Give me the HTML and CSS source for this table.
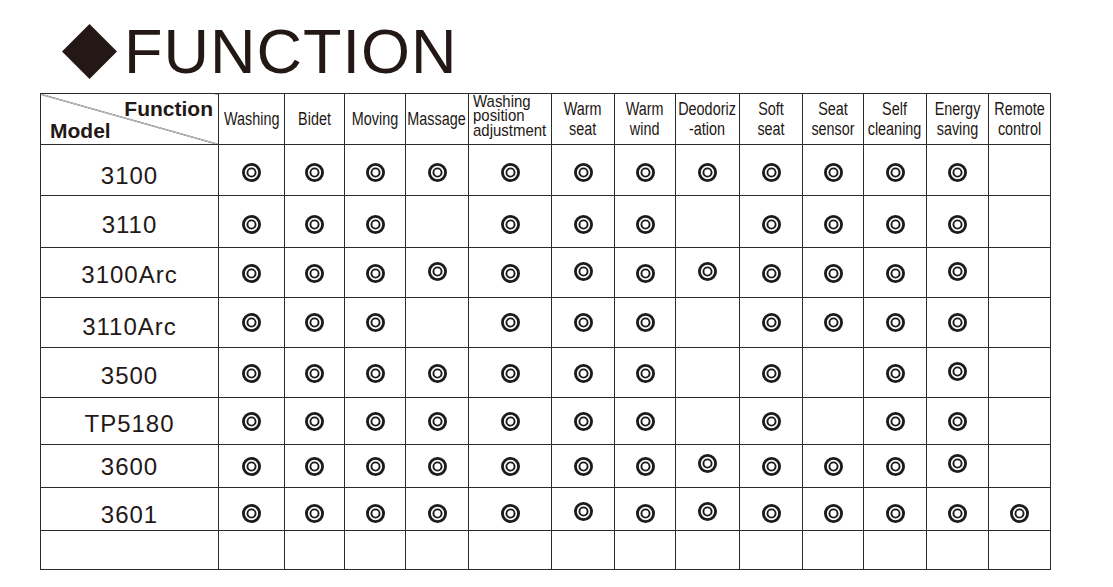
FILE: index.html
```html
<!DOCTYPE html>
<html lang="en">
<head>
<meta charset="utf-8">
<title>FUNCTION</title>
<link rel="stylesheet" href="styles.css">
</head>
<body>
<div class="page">
  <div class="title">
    <svg class="diamond" viewBox="0 0 55 55"><polygon points="27.5,0 55,27.5 27.5,55 0,27.5"/></svg>
    <h1>FUNCTION</h1>
  </div>
  <table class="grid">
    <colgroup>
      <col class="c-model"><col class="c66"><col class="c60"><col class="c61"><col class="c63"><col class="c83"><col class="c63"><col class="c61"><col class="c64"><col class="c63"><col class="c61"><col class="c63"><col class="c62"><col class="c62">
    </colgroup>
    <thead>
      <tr class="rh">
        <th class="fn"><div class="fn-top">Function</div><div class="fn-bottom">Model</div></th>
        <th><div class="hw"><span>Washing</span></div></th>
        <th><div class="hw"><span>Bidet</span></div></th>
        <th><div class="hw"><span>Moving</span></div></th>
        <th><div class="hw"><span>Massage</span></div></th>
        <th class="tight"><div class="hw left"><span>Washing<br>position<br>adjustment</span></div></th>
        <th><div class="hw"><span>Warm<br>seat</span></div></th>
        <th><div class="hw"><span>Warm<br>wind</span></div></th>
        <th><div class="hw"><span>Deodoriz<br>-ation</span></div></th>
        <th><div class="hw"><span>Soft<br>seat</span></div></th>
        <th><div class="hw"><span>Seat<br>sensor</span></div></th>
        <th><div class="hw"><span>Self<br>cleaning</span></div></th>
        <th><div class="hw"><span>Energy<br>saving</span></div></th>
        <th><div class="hw"><span>Remote<br>control</span></div></th>
      </tr>
    </thead>
    <tbody>
      <tr class="r1">
        <td class="model">3100</td>
        <td class="mk"><svg class="o" viewBox="0 0 20 20"><circle class="co" cx="10" cy="10" r="8.5"/><circle class="ci" cx="10" cy="10" r="4.3"/></svg></td>
        <td class="mk"><svg class="o" viewBox="0 0 20 20"><circle class="co" cx="10" cy="10" r="8.5"/><circle class="ci" cx="10" cy="10" r="4.3"/></svg></td>
        <td class="mk"><svg class="o" viewBox="0 0 20 20"><circle class="co" cx="10" cy="10" r="8.5"/><circle class="ci" cx="10" cy="10" r="4.3"/></svg></td>
        <td class="mk"><svg class="o" viewBox="0 0 20 20"><circle class="co" cx="10" cy="10" r="8.5"/><circle class="ci" cx="10" cy="10" r="4.3"/></svg></td>
        <td class="mk"><svg class="o" viewBox="0 0 20 20"><circle class="co" cx="10" cy="10" r="8.5"/><circle class="ci" cx="10" cy="10" r="4.3"/></svg></td>
        <td class="mk"><svg class="o" viewBox="0 0 20 20"><circle class="co" cx="10" cy="10" r="8.5"/><circle class="ci" cx="10" cy="10" r="4.3"/></svg></td>
        <td class="mk"><svg class="o" viewBox="0 0 20 20"><circle class="co" cx="10" cy="10" r="8.5"/><circle class="ci" cx="10" cy="10" r="4.3"/></svg></td>
        <td class="mk"><svg class="o" viewBox="0 0 20 20"><circle class="co" cx="10" cy="10" r="8.5"/><circle class="ci" cx="10" cy="10" r="4.3"/></svg></td>
        <td class="mk"><svg class="o" viewBox="0 0 20 20"><circle class="co" cx="10" cy="10" r="8.5"/><circle class="ci" cx="10" cy="10" r="4.3"/></svg></td>
        <td class="mk"><svg class="o" viewBox="0 0 20 20"><circle class="co" cx="10" cy="10" r="8.5"/><circle class="ci" cx="10" cy="10" r="4.3"/></svg></td>
        <td class="mk"><svg class="o" viewBox="0 0 20 20"><circle class="co" cx="10" cy="10" r="8.5"/><circle class="ci" cx="10" cy="10" r="4.3"/></svg></td>
        <td class="mk"><svg class="o" viewBox="0 0 20 20"><circle class="co" cx="10" cy="10" r="8.5"/><circle class="ci" cx="10" cy="10" r="4.3"/></svg></td>
        <td class="mk"></td>
      </tr>
      <tr class="r2">
        <td class="model">3110</td>
        <td class="mk"><svg class="o" viewBox="0 0 20 20"><circle class="co" cx="10" cy="10" r="8.5"/><circle class="ci" cx="10" cy="10" r="4.3"/></svg></td>
        <td class="mk"><svg class="o" viewBox="0 0 20 20"><circle class="co" cx="10" cy="10" r="8.5"/><circle class="ci" cx="10" cy="10" r="4.3"/></svg></td>
        <td class="mk"><svg class="o" viewBox="0 0 20 20"><circle class="co" cx="10" cy="10" r="8.5"/><circle class="ci" cx="10" cy="10" r="4.3"/></svg></td>
        <td class="mk"></td>
        <td class="mk"><svg class="o" viewBox="0 0 20 20"><circle class="co" cx="10" cy="10" r="8.5"/><circle class="ci" cx="10" cy="10" r="4.3"/></svg></td>
        <td class="mk"><svg class="o" viewBox="0 0 20 20"><circle class="co" cx="10" cy="10" r="8.5"/><circle class="ci" cx="10" cy="10" r="4.3"/></svg></td>
        <td class="mk"><svg class="o" viewBox="0 0 20 20"><circle class="co" cx="10" cy="10" r="8.5"/><circle class="ci" cx="10" cy="10" r="4.3"/></svg></td>
        <td class="mk"></td>
        <td class="mk"><svg class="o" viewBox="0 0 20 20"><circle class="co" cx="10" cy="10" r="8.5"/><circle class="ci" cx="10" cy="10" r="4.3"/></svg></td>
        <td class="mk"><svg class="o" viewBox="0 0 20 20"><circle class="co" cx="10" cy="10" r="8.5"/><circle class="ci" cx="10" cy="10" r="4.3"/></svg></td>
        <td class="mk"><svg class="o" viewBox="0 0 20 20"><circle class="co" cx="10" cy="10" r="8.5"/><circle class="ci" cx="10" cy="10" r="4.3"/></svg></td>
        <td class="mk"><svg class="o" viewBox="0 0 20 20"><circle class="co" cx="10" cy="10" r="8.5"/><circle class="ci" cx="10" cy="10" r="4.3"/></svg></td>
        <td class="mk"></td>
      </tr>
      <tr class="r3">
        <td class="model">3100Arc</td>
        <td class="mk"><svg class="o" viewBox="0 0 20 20"><circle class="co" cx="10" cy="10" r="8.5"/><circle class="ci" cx="10" cy="10" r="4.3"/></svg></td>
        <td class="mk"><svg class="o" viewBox="0 0 20 20"><circle class="co" cx="10" cy="10" r="8.5"/><circle class="ci" cx="10" cy="10" r="4.3"/></svg></td>
        <td class="mk"><svg class="o" viewBox="0 0 20 20"><circle class="co" cx="10" cy="10" r="8.5"/><circle class="ci" cx="10" cy="10" r="4.3"/></svg></td>
        <td class="mk hi"><svg class="o" viewBox="0 0 20 20"><circle class="co" cx="10" cy="10" r="8.5"/><circle class="ci" cx="10" cy="10" r="4.3"/></svg></td>
        <td class="mk"><svg class="o" viewBox="0 0 20 20"><circle class="co" cx="10" cy="10" r="8.5"/><circle class="ci" cx="10" cy="10" r="4.3"/></svg></td>
        <td class="mk hi"><svg class="o" viewBox="0 0 20 20"><circle class="co" cx="10" cy="10" r="8.5"/><circle class="ci" cx="10" cy="10" r="4.3"/></svg></td>
        <td class="mk"><svg class="o" viewBox="0 0 20 20"><circle class="co" cx="10" cy="10" r="8.5"/><circle class="ci" cx="10" cy="10" r="4.3"/></svg></td>
        <td class="mk hi"><svg class="o" viewBox="0 0 20 20"><circle class="co" cx="10" cy="10" r="8.5"/><circle class="ci" cx="10" cy="10" r="4.3"/></svg></td>
        <td class="mk"><svg class="o" viewBox="0 0 20 20"><circle class="co" cx="10" cy="10" r="8.5"/><circle class="ci" cx="10" cy="10" r="4.3"/></svg></td>
        <td class="mk"><svg class="o" viewBox="0 0 20 20"><circle class="co" cx="10" cy="10" r="8.5"/><circle class="ci" cx="10" cy="10" r="4.3"/></svg></td>
        <td class="mk"><svg class="o" viewBox="0 0 20 20"><circle class="co" cx="10" cy="10" r="8.5"/><circle class="ci" cx="10" cy="10" r="4.3"/></svg></td>
        <td class="mk hi"><svg class="o" viewBox="0 0 20 20"><circle class="co" cx="10" cy="10" r="8.5"/><circle class="ci" cx="10" cy="10" r="4.3"/></svg></td>
        <td class="mk"></td>
      </tr>
      <tr class="r4">
        <td class="model">3110Arc</td>
        <td class="mk"><svg class="o" viewBox="0 0 20 20"><circle class="co" cx="10" cy="10" r="8.5"/><circle class="ci" cx="10" cy="10" r="4.3"/></svg></td>
        <td class="mk"><svg class="o" viewBox="0 0 20 20"><circle class="co" cx="10" cy="10" r="8.5"/><circle class="ci" cx="10" cy="10" r="4.3"/></svg></td>
        <td class="mk"><svg class="o" viewBox="0 0 20 20"><circle class="co" cx="10" cy="10" r="8.5"/><circle class="ci" cx="10" cy="10" r="4.3"/></svg></td>
        <td class="mk"></td>
        <td class="mk"><svg class="o" viewBox="0 0 20 20"><circle class="co" cx="10" cy="10" r="8.5"/><circle class="ci" cx="10" cy="10" r="4.3"/></svg></td>
        <td class="mk"><svg class="o" viewBox="0 0 20 20"><circle class="co" cx="10" cy="10" r="8.5"/><circle class="ci" cx="10" cy="10" r="4.3"/></svg></td>
        <td class="mk"><svg class="o" viewBox="0 0 20 20"><circle class="co" cx="10" cy="10" r="8.5"/><circle class="ci" cx="10" cy="10" r="4.3"/></svg></td>
        <td class="mk"></td>
        <td class="mk"><svg class="o" viewBox="0 0 20 20"><circle class="co" cx="10" cy="10" r="8.5"/><circle class="ci" cx="10" cy="10" r="4.3"/></svg></td>
        <td class="mk"><svg class="o" viewBox="0 0 20 20"><circle class="co" cx="10" cy="10" r="8.5"/><circle class="ci" cx="10" cy="10" r="4.3"/></svg></td>
        <td class="mk"><svg class="o" viewBox="0 0 20 20"><circle class="co" cx="10" cy="10" r="8.5"/><circle class="ci" cx="10" cy="10" r="4.3"/></svg></td>
        <td class="mk"><svg class="o" viewBox="0 0 20 20"><circle class="co" cx="10" cy="10" r="8.5"/><circle class="ci" cx="10" cy="10" r="4.3"/></svg></td>
        <td class="mk"></td>
      </tr>
      <tr class="r5">
        <td class="model">3500</td>
        <td class="mk"><svg class="o" viewBox="0 0 20 20"><circle class="co" cx="10" cy="10" r="8.5"/><circle class="ci" cx="10" cy="10" r="4.3"/></svg></td>
        <td class="mk"><svg class="o" viewBox="0 0 20 20"><circle class="co" cx="10" cy="10" r="8.5"/><circle class="ci" cx="10" cy="10" r="4.3"/></svg></td>
        <td class="mk"><svg class="o" viewBox="0 0 20 20"><circle class="co" cx="10" cy="10" r="8.5"/><circle class="ci" cx="10" cy="10" r="4.3"/></svg></td>
        <td class="mk"><svg class="o" viewBox="0 0 20 20"><circle class="co" cx="10" cy="10" r="8.5"/><circle class="ci" cx="10" cy="10" r="4.3"/></svg></td>
        <td class="mk"><svg class="o" viewBox="0 0 20 20"><circle class="co" cx="10" cy="10" r="8.5"/><circle class="ci" cx="10" cy="10" r="4.3"/></svg></td>
        <td class="mk"><svg class="o" viewBox="0 0 20 20"><circle class="co" cx="10" cy="10" r="8.5"/><circle class="ci" cx="10" cy="10" r="4.3"/></svg></td>
        <td class="mk"><svg class="o" viewBox="0 0 20 20"><circle class="co" cx="10" cy="10" r="8.5"/><circle class="ci" cx="10" cy="10" r="4.3"/></svg></td>
        <td class="mk"></td>
        <td class="mk"><svg class="o" viewBox="0 0 20 20"><circle class="co" cx="10" cy="10" r="8.5"/><circle class="ci" cx="10" cy="10" r="4.3"/></svg></td>
        <td class="mk"></td>
        <td class="mk"><svg class="o" viewBox="0 0 20 20"><circle class="co" cx="10" cy="10" r="8.5"/><circle class="ci" cx="10" cy="10" r="4.3"/></svg></td>
        <td class="mk hi"><svg class="o" viewBox="0 0 20 20"><circle class="co" cx="10" cy="10" r="8.5"/><circle class="ci" cx="10" cy="10" r="4.3"/></svg></td>
        <td class="mk"></td>
      </tr>
      <tr class="r6">
        <td class="model">TP5180</td>
        <td class="mk"><svg class="o" viewBox="0 0 20 20"><circle class="co" cx="10" cy="10" r="8.5"/><circle class="ci" cx="10" cy="10" r="4.3"/></svg></td>
        <td class="mk"><svg class="o" viewBox="0 0 20 20"><circle class="co" cx="10" cy="10" r="8.5"/><circle class="ci" cx="10" cy="10" r="4.3"/></svg></td>
        <td class="mk"><svg class="o" viewBox="0 0 20 20"><circle class="co" cx="10" cy="10" r="8.5"/><circle class="ci" cx="10" cy="10" r="4.3"/></svg></td>
        <td class="mk"><svg class="o" viewBox="0 0 20 20"><circle class="co" cx="10" cy="10" r="8.5"/><circle class="ci" cx="10" cy="10" r="4.3"/></svg></td>
        <td class="mk"><svg class="o" viewBox="0 0 20 20"><circle class="co" cx="10" cy="10" r="8.5"/><circle class="ci" cx="10" cy="10" r="4.3"/></svg></td>
        <td class="mk"><svg class="o" viewBox="0 0 20 20"><circle class="co" cx="10" cy="10" r="8.5"/><circle class="ci" cx="10" cy="10" r="4.3"/></svg></td>
        <td class="mk"><svg class="o" viewBox="0 0 20 20"><circle class="co" cx="10" cy="10" r="8.5"/><circle class="ci" cx="10" cy="10" r="4.3"/></svg></td>
        <td class="mk"></td>
        <td class="mk"><svg class="o" viewBox="0 0 20 20"><circle class="co" cx="10" cy="10" r="8.5"/><circle class="ci" cx="10" cy="10" r="4.3"/></svg></td>
        <td class="mk"></td>
        <td class="mk"><svg class="o" viewBox="0 0 20 20"><circle class="co" cx="10" cy="10" r="8.5"/><circle class="ci" cx="10" cy="10" r="4.3"/></svg></td>
        <td class="mk"><svg class="o" viewBox="0 0 20 20"><circle class="co" cx="10" cy="10" r="8.5"/><circle class="ci" cx="10" cy="10" r="4.3"/></svg></td>
        <td class="mk"></td>
      </tr>
      <tr class="r7">
        <td class="model">3600</td>
        <td class="mk"><svg class="o" viewBox="0 0 20 20"><circle class="co" cx="10" cy="10" r="8.5"/><circle class="ci" cx="10" cy="10" r="4.3"/></svg></td>
        <td class="mk"><svg class="o" viewBox="0 0 20 20"><circle class="co" cx="10" cy="10" r="8.5"/><circle class="ci" cx="10" cy="10" r="4.3"/></svg></td>
        <td class="mk"><svg class="o" viewBox="0 0 20 20"><circle class="co" cx="10" cy="10" r="8.5"/><circle class="ci" cx="10" cy="10" r="4.3"/></svg></td>
        <td class="mk"><svg class="o" viewBox="0 0 20 20"><circle class="co" cx="10" cy="10" r="8.5"/><circle class="ci" cx="10" cy="10" r="4.3"/></svg></td>
        <td class="mk"><svg class="o" viewBox="0 0 20 20"><circle class="co" cx="10" cy="10" r="8.5"/><circle class="ci" cx="10" cy="10" r="4.3"/></svg></td>
        <td class="mk"><svg class="o" viewBox="0 0 20 20"><circle class="co" cx="10" cy="10" r="8.5"/><circle class="ci" cx="10" cy="10" r="4.3"/></svg></td>
        <td class="mk"><svg class="o" viewBox="0 0 20 20"><circle class="co" cx="10" cy="10" r="8.5"/><circle class="ci" cx="10" cy="10" r="4.3"/></svg></td>
        <td class="mk hi"><svg class="o" viewBox="0 0 20 20"><circle class="co" cx="10" cy="10" r="8.5"/><circle class="ci" cx="10" cy="10" r="4.3"/></svg></td>
        <td class="mk"><svg class="o" viewBox="0 0 20 20"><circle class="co" cx="10" cy="10" r="8.5"/><circle class="ci" cx="10" cy="10" r="4.3"/></svg></td>
        <td class="mk"><svg class="o" viewBox="0 0 20 20"><circle class="co" cx="10" cy="10" r="8.5"/><circle class="ci" cx="10" cy="10" r="4.3"/></svg></td>
        <td class="mk"><svg class="o" viewBox="0 0 20 20"><circle class="co" cx="10" cy="10" r="8.5"/><circle class="ci" cx="10" cy="10" r="4.3"/></svg></td>
        <td class="mk hi"><svg class="o" viewBox="0 0 20 20"><circle class="co" cx="10" cy="10" r="8.5"/><circle class="ci" cx="10" cy="10" r="4.3"/></svg></td>
        <td class="mk"></td>
      </tr>
      <tr class="r8">
        <td class="model">3601</td>
        <td class="mk"><svg class="o" viewBox="0 0 20 20"><circle class="co" cx="10" cy="10" r="8.5"/><circle class="ci" cx="10" cy="10" r="4.3"/></svg></td>
        <td class="mk"><svg class="o" viewBox="0 0 20 20"><circle class="co" cx="10" cy="10" r="8.5"/><circle class="ci" cx="10" cy="10" r="4.3"/></svg></td>
        <td class="mk"><svg class="o" viewBox="0 0 20 20"><circle class="co" cx="10" cy="10" r="8.5"/><circle class="ci" cx="10" cy="10" r="4.3"/></svg></td>
        <td class="mk"><svg class="o" viewBox="0 0 20 20"><circle class="co" cx="10" cy="10" r="8.5"/><circle class="ci" cx="10" cy="10" r="4.3"/></svg></td>
        <td class="mk"><svg class="o" viewBox="0 0 20 20"><circle class="co" cx="10" cy="10" r="8.5"/><circle class="ci" cx="10" cy="10" r="4.3"/></svg></td>
        <td class="mk hi"><svg class="o" viewBox="0 0 20 20"><circle class="co" cx="10" cy="10" r="8.5"/><circle class="ci" cx="10" cy="10" r="4.3"/></svg></td>
        <td class="mk"><svg class="o" viewBox="0 0 20 20"><circle class="co" cx="10" cy="10" r="8.5"/><circle class="ci" cx="10" cy="10" r="4.3"/></svg></td>
        <td class="mk hi"><svg class="o" viewBox="0 0 20 20"><circle class="co" cx="10" cy="10" r="8.5"/><circle class="ci" cx="10" cy="10" r="4.3"/></svg></td>
        <td class="mk"><svg class="o" viewBox="0 0 20 20"><circle class="co" cx="10" cy="10" r="8.5"/><circle class="ci" cx="10" cy="10" r="4.3"/></svg></td>
        <td class="mk"><svg class="o" viewBox="0 0 20 20"><circle class="co" cx="10" cy="10" r="8.5"/><circle class="ci" cx="10" cy="10" r="4.3"/></svg></td>
        <td class="mk"><svg class="o" viewBox="0 0 20 20"><circle class="co" cx="10" cy="10" r="8.5"/><circle class="ci" cx="10" cy="10" r="4.3"/></svg></td>
        <td class="mk"><svg class="o" viewBox="0 0 20 20"><circle class="co" cx="10" cy="10" r="8.5"/><circle class="ci" cx="10" cy="10" r="4.3"/></svg></td>
        <td class="mk"><svg class="o" viewBox="0 0 20 20"><circle class="co" cx="10" cy="10" r="8.5"/><circle class="ci" cx="10" cy="10" r="4.3"/></svg></td>
      </tr>
      <tr class="r9">
        <td class="model"></td>
        <td class="mk"></td><td class="mk"></td><td class="mk"></td><td class="mk"></td><td class="mk"></td><td class="mk"></td><td class="mk"></td><td class="mk"></td><td class="mk"></td><td class="mk"></td><td class="mk"></td><td class="mk"></td><td class="mk"></td>
      </tr>
    </tbody>
  </table>
</div>
</body>
</html>
```

FILE: styles.css
```css
html, body {
  margin: 0;
  background: #ffffff;
}
body {
  font-family: "Liberation Sans", Arial, sans-serif;
  color: #231815;
}
.page {
  padding: 20px 0 0 40px;
}
.title {
  display: flex;
  align-items: center;
  gap: 7px;
  margin-left: 22px;
  height: 63px;
  margin-bottom: 10px;
}
.diamond {
  width: 55px;
  height: 55px;
  flex: none;
}
.diamond polygon {
  fill: #231815;
}
.title h1 {
  margin: 0;
  font-size: 63px;
  line-height: 63px;
  font-weight: normal;
  letter-spacing: 1px;
  color: #231815;
}

.grid {
  border-collapse: collapse;
  table-layout: fixed;
  width: 1011px;
}
.grid th,
.grid td {
  border: 1px solid #2b2b2b;
  padding: 0;
}
.c-model { width: 178px; }
.c60 { width: 60px; }
.c61 { width: 61px; }
.c62 { width: 62px; }
.c63 { width: 63px; }
.c64 { width: 64px; }
.c66 { width: 66px; }
.c83 { width: 83px; }

.rh { height: 51px; }
.r1 { height: 51px; }
.r2 { height: 52px; }
.r3 { height: 50px; }
.r4 { height: 50px; }
.r5 { height: 50px; }
.r6 { height: 47px; }
.r7 { height: 43px; }
.r8 { height: 43px; }
.r9 { height: 39px; }

/* header */
.grid th {
  font-weight: normal;
  font-size: 18px;
  line-height: 20.5px;
  vertical-align: middle;
  color: #231815;
}
.hw {
  display: flex;
  justify-content: center;
}
.hw span {
  display: inline-block;
  white-space: nowrap;
  text-align: center;
  transform: scaleX(0.8);
}
.grid th.tight {
  font-size: 17px;
  line-height: 14.5px;
  padding-bottom: 5px;
}
.hw.left {
  justify-content: flex-start;
  padding-left: 4px;
}
.hw.left span {
  text-align: left;
  transform-origin: left center;
  transform: scaleX(0.88);
}

.grid th.fn {
  vertical-align: top;
  padding-top: 4px;
  font-weight: bold;
  font-size: 21px;
  line-height: 22px;
  background: linear-gradient(to top right,
    transparent calc(50% - 0.7px),
    #2b2b2b 50%,
    transparent calc(50% + 0.7px));
}
.fn-top {
  text-align: right;
  padding-right: 5px;
}
.fn-bottom {
  text-align: left;
  padding-left: 9px;
}

/* body */
.model {
  font-size: 24px;
  letter-spacing: 1px;
  text-align: center;
  padding-left: 1px;
  vertical-align: middle;
  color: #231815;
}
.r1 .model { padding-top: 11px; }
.r2 .model { padding-top: 7px; }
.r3 .model { padding-top: 5px; }
.r4 .model { padding-top: 8px; }
.r5 .model { padding-top: 7px; }
.r6 .model { padding-top: 5px; }
.r7 .model { padding-top: 1px; }
.r8 .model { padding-top: 12px; }

.mk {
  vertical-align: middle;
}
.r1 .mk { padding-top: 5px; }
.r2 .mk { padding-top: 6px; }
.r3 .mk { padding-top: 2px; }
.r5 .mk { padding-top: 2px; }
.r6 .mk { padding-top: 1px; }
.r8 .mk { padding-top: 9px; }
.grid td.hi { padding-bottom: 5px; }

.o {
  display: block;
  width: 19px;
  height: 19px;
  margin: 0 auto;
}
.o .co {
  fill: none;
  stroke: #1b1b1b;
  stroke-width: 3;
}
.o .ci {
  fill: none;
  stroke: #1b1b1b;
  stroke-width: 2;
}
```
